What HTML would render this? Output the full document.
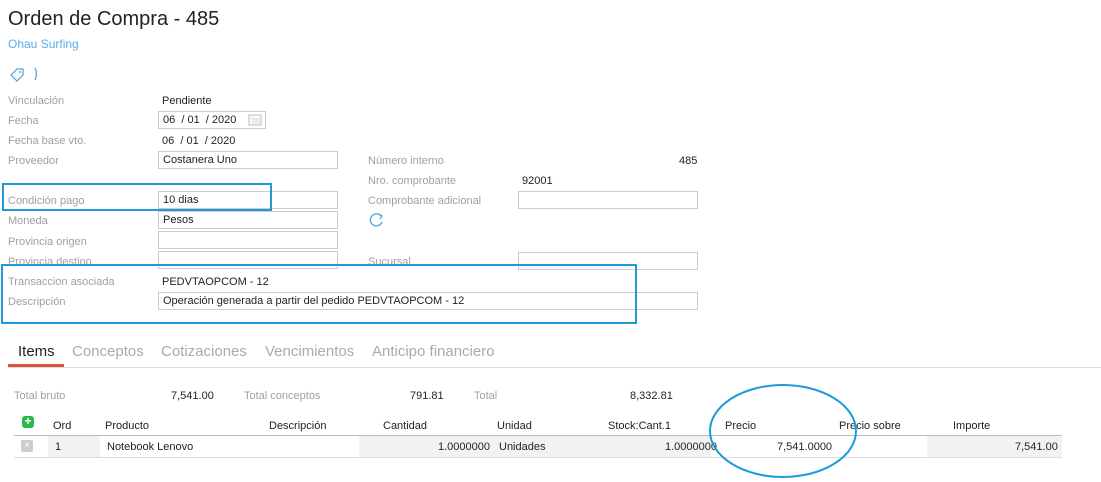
<!DOCTYPE html>
<html><head><meta charset="utf-8"><style>
body{margin:0;width:1101px;height:482px;background:#fff;font-family:"Liberation Sans",sans-serif;position:relative;overflow:hidden}
.a{position:absolute;white-space:nowrap}
.l{font-size:11px;color:#a0a0a0}
.v{font-size:11px;color:#222}
.i{position:absolute;border:1px solid #ccc;box-sizing:border-box;font-size:11px;color:#222;padding:0 4px;line-height:16px;background:#fff}
.h{font-size:11px;color:#222}
.t{font-size:15px;color:#aaa}
</style></head><body>
<div class="a" style="left:8px;top:8px;font-size:20px;color:#222">Orden de Compra - 485</div>
<div class="a" style="left:8px;top:37px;font-size:12px;color:#5aaee8">Ohau Surfing</div>
<svg class="a" style="left:9px;top:66px" width="32" height="16"><path d="M2 9 L8 3 L14 3 L14 9 L8 15 Z" fill="none" stroke="#4aa3e0" stroke-width="1.2"/><circle cx="11" cy="6" r="1" fill="#4aa3e0"/><path d="M26 2 Q29 8 26 14" fill="none" stroke="#4aa3e0" stroke-width="1.3"/></svg>

<div class="a l" style="left:8px;top:95px">Vinculación</div><div class="a v" style="left:162px;top:95px">Pendiente</div>
<div class="a l" style="left:8px;top:115px">Fecha</div>
<div class="i" style="left:158px;top:111px;width:108px;height:18px">06 &nbsp;/ 01 &nbsp;/ 2020</div>
<svg class="a" style="left:248px;top:113px" width="14" height="13"><rect x="1" y="2" width="12" height="10" fill="none" stroke="#bbb"/><path d="M1 5H13M4 7H12M4 9H12M5 5V12M8 5V12M11 5V12" stroke="#ccc" stroke-width=".6"/></svg>
<div class="a l" style="left:8px;top:135px">Fecha base vto.</div><div class="a v" style="left:162px;top:135px">06 &nbsp;/ 01 &nbsp;/ 2020</div>
<div class="a l" style="left:8px;top:155px">Proveedor</div><div class="i" style="left:158px;top:151px;width:180px;height:18px">Costanera Uno</div>
<div class="a l" style="left:8px;top:195px">Condición pago</div><div class="i" style="left:158px;top:191px;width:180px;height:18px">10 dias</div>
<div class="a l" style="left:8px;top:215px">Moneda</div><div class="i" style="left:158px;top:211px;width:180px;height:18px">Pesos</div>
<div class="a l" style="left:8px;top:236px">Provincia origen</div><div class="i" style="left:158px;top:231px;width:180px;height:18px"></div>
<div class="a l" style="left:8px;top:256px">Provincia destino</div><div class="i" style="left:158px;top:251px;width:180px;height:18px"></div>
<div class="a l" style="left:8px;top:276px">Transaccion asociada</div><div class="a v" style="left:162px;top:276px">PEDVTAOPCOM - 12</div>
<div class="a l" style="left:8px;top:296px">Descripción</div><div class="i" style="left:158px;top:292px;width:540px;height:18px">Operación generada a partir del pedido PEDVTAOPCOM - 12</div>

<div class="a l" style="left:368px;top:155px">Número interno</div><div class="a v" style="left:679px;top:155px">485</div>
<div class="a l" style="left:368px;top:175px">Nro. comprobante</div><div class="a v" style="left:522px;top:175px">92001</div>
<div class="a l" style="left:368px;top:195px">Comprobante adicional</div><div class="i" style="left:518px;top:191px;width:180px;height:18px"></div>
<svg class="a" style="left:369px;top:212px" width="16" height="16"><path d="M12 4 A6 6 0 1 0 13 10" fill="none" stroke="#4aa3e0" stroke-width="1.3"/><path d="M10 2 L13 4 L11 7" fill="none" stroke="#4aa3e0" stroke-width="1.2"/></svg>
<div class="a l" style="left:368px;top:256px">Sucursal</div><div class="i" style="left:518px;top:252px;width:180px;height:18px"></div>

<div class="a" style="left:2px;top:183px;width:266px;height:24px;border:2px solid #1e9ad8"></div>
<div class="a" style="left:1px;top:264px;width:632px;height:56px;border:2px solid #1e9ad8"></div>

<div class="a" style="left:18px;top:343px;font-size:15px;color:#222">Items</div>
<div class="a t" style="left:72px;top:343px">Conceptos</div>
<div class="a t" style="left:161px;top:343px">Cotizaciones</div>
<div class="a t" style="left:265px;top:343px">Vencimientos</div>
<div class="a t" style="left:372px;top:343px">Anticipo financiero</div>
<div class="a" style="left:8px;top:367px;width:1093px;height:1px;background:#ddd"></div>
<div class="a" style="left:8px;top:364px;width:56px;height:3px;background:#e0533c"></div>

<div class="a l" style="left:14px;top:390px">Total bruto</div><div class="a v" style="left:171px;top:390px">7,541.00</div>
<div class="a l" style="left:244px;top:390px">Total conceptos</div><div class="a v" style="left:410px;top:390px">791.81</div>
<div class="a l" style="left:474px;top:390px">Total</div><div class="a v" style="left:630px;top:390px">8,332.81</div>

<div class="a" style="left:22px;top:416px;width:12px;height:12px;border-radius:3px;background:#2db84a;color:#fff;font-size:12px;line-height:11px;text-align:center;font-weight:bold">+</div>
<div class="a h" style="left:53px;top:420px">Ord</div>
<div class="a h" style="left:105px;top:420px">Producto</div>
<div class="a h" style="left:269px;top:420px">Descripción</div>
<div class="a h" style="left:383px;top:420px">Cantidad</div>
<div class="a h" style="left:497px;top:420px">Unidad</div>
<div class="a h" style="left:608px;top:420px">Stock:Cant.1</div>
<div class="a h" style="left:725px;top:420px">Precio</div>
<div class="a h" style="left:839px;top:420px">Precio sobre</div>
<div class="a h" style="left:953px;top:420px">Importe</div>
<div class="a" style="left:14px;top:435px;width:1048px;height:1px;background:#bbb"></div>
<div class="a" style="left:48px;top:436px;width:52px;height:21px;background:#f2f2f2"></div>
<div class="a" style="left:359px;top:436px;width:352px;height:21px;background:#f2f2f2"></div>
<div class="a" style="left:927px;top:436px;width:135px;height:21px;background:#f2f2f2"></div>
<div class="a" style="left:14px;top:457px;width:1048px;height:1px;background:#ddd"></div>
<div class="a" style="left:21px;top:440px;width:12px;height:12px;border-radius:2px;background:#ccc;color:#fff;font-size:10px;line-height:12px;text-align:center">×</div>
<div class="a v" style="left:55px;top:441px">1</div>
<div class="a v" style="left:107px;top:441px">Notebook Lenovo</div>
<div class="a v" style="left:438px;top:441px">1.0000000</div>
<div class="a v" style="left:499px;top:441px">Unidades</div>
<div class="a v" style="left:665px;top:441px">1.0000000</div>
<div class="a v" style="left:777px;top:441px">7,541.0000</div>
<div class="a v" style="left:1015px;top:441px">7,541.00</div>

<svg class="a" style="left:700px;top:382px" width="170" height="100"><ellipse cx="83" cy="49" rx="73" ry="46" fill="none" stroke="#1e9ad8" stroke-width="2"/></svg>
</body></html>
